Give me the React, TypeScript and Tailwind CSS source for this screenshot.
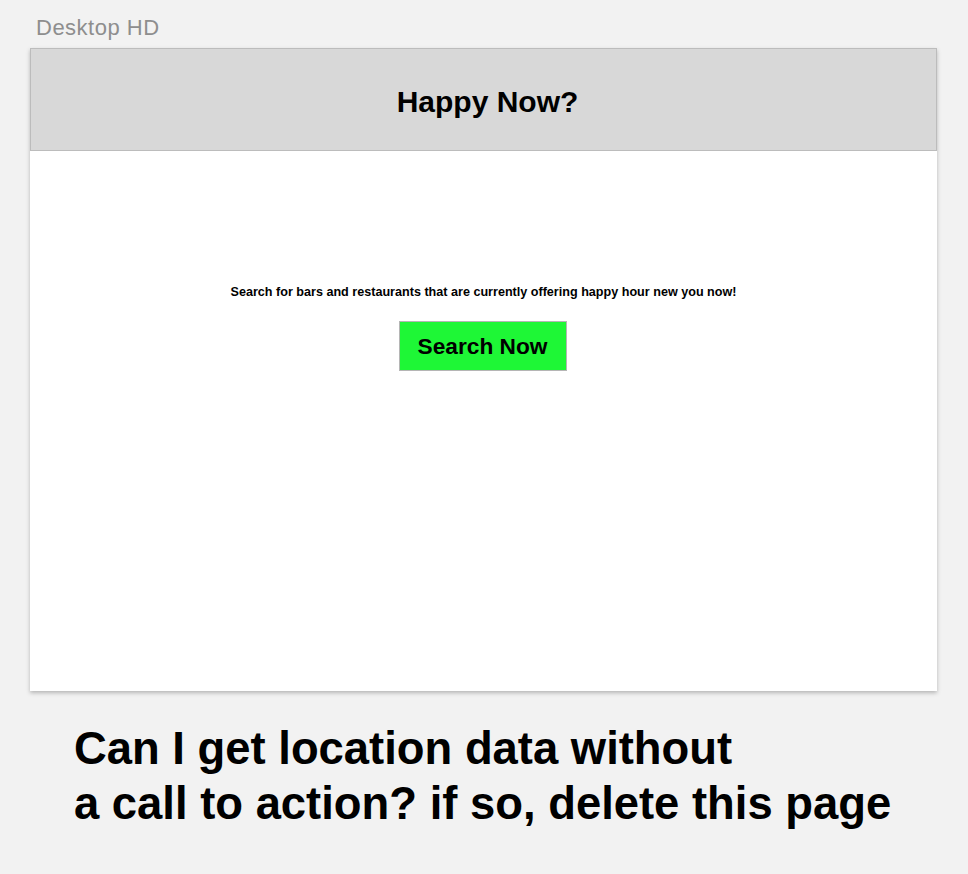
export default function App() {
  return (
    <div className="min-h-[874px] w-[968px] bg-[#f2f2f2] font-['Liberation_Sans',Arial,sans-serif]">
      <div className="pl-[36px] pt-[14px] h-[48px] text-[22px] leading-[28px] tracking-[0.5px] text-[#8e8e8e]">
        Desktop HD
      </div>
      <div className="ml-[30px] w-[907px] h-[643px] bg-white shadow-[0_2px_4px_rgba(0,0,0,0.25)] flex flex-col">
        <header className="h-[103px] pt-[4px] pl-[8px] bg-[#d8d8d8] border border-[#bcbcbc] flex items-center justify-center">
          <h1 className="text-[30px] font-bold text-black">Happy Now?</h1>
        </header>
        <main className="flex flex-col items-center pt-[133px]">
          <p className="text-[12.6px] font-bold text-black leading-[16px]">
            Search for bars and restaurants that are currently offering happy hour new you now!
          </p>
          <button className="mt-[21px] -translate-x-px w-[168px] h-[50px] bg-[#1ef736] border border-[#b5b5b5] text-[22.7px] font-bold text-black">
            Search Now
          </button>
        </main>
      </div>
      <div className="pl-[74px] pt-[30px] text-[45.4px] leading-[55px] font-bold text-black">
        Can I get location data without
        <br />
        a call to action? if so, delete this page
      </div>
    </div>
  );
}
